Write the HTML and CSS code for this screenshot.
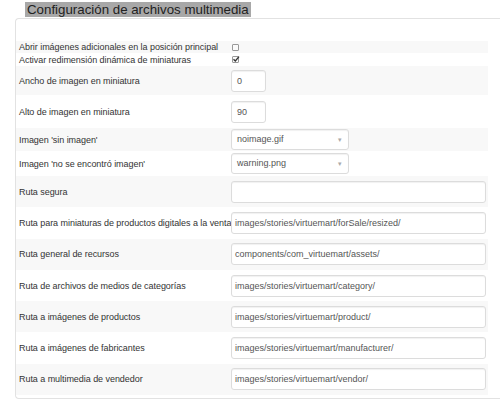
FILE: index.html
```html
<!DOCTYPE html>
<html lang="es">
<head>
  <meta charset="UTF-8">
  <title>Configuración de archivos multimedia</title>
  <link rel="stylesheet" href="styles.css">
</head>
<body>
  <div class="legend">Configuración de archivos multimedia</div>

  <div class="panel">
    <div class="row r-check-1">
      <div class="key">Abrir imágenes adicionales en la posición principal</div>
      <span class="checkbox"></span>
    </div>
    <div class="row r-check-2">
      <div class="key">Activar redimensión dinámica de miniaturas</div>
      <span class="checkbox">
        <svg viewBox="0 0 8 8" width="8" height="8"><path d="M1.5 4.2 L3.3 6 L7 1.6" fill="none" stroke="#333" stroke-width="1.3"/></svg>
      </span>
    </div>
    <div class="row r-width">
      <div class="key">Ancho de imagen en miniatura</div>
      <div class="field small">0</div>
    </div>
    <div class="row r-height">
      <div class="key">Alto de imagen en miniatura</div>
      <div class="field small">90</div>
    </div>
    <div class="row r-select-1">
      <div class="key">Imagen 'sin imagen'</div>
      <div class="field select">noimage.gif<span class="arrow">▾</span></div>
    </div>
    <div class="row r-select-2">
      <div class="key">Imagen 'no se encontró imagen'</div>
      <div class="field select">warning.png<span class="arrow">▾</span></div>
    </div>
    <div class="row r-path">
      <div class="key">Ruta segura</div>
      <div class="field wide"></div>
    </div>
    <div class="row r-path">
      <div class="key">Ruta para miniaturas de productos digitales a la venta</div>
      <div class="field wide">images/stories/virtuemart/forSale/resized/</div>
    </div>
    <div class="row r-path">
      <div class="key">Ruta general de recursos</div>
      <div class="field wide">components/com_virtuemart/assets/</div>
    </div>
    <div class="row r-path">
      <div class="key">Ruta de archivos de medios de categorías</div>
      <div class="field wide">images/stories/virtuemart/category/</div>
    </div>
    <div class="row r-path">
      <div class="key">Ruta a imágenes de productos</div>
      <div class="field wide">images/stories/virtuemart/product/</div>
    </div>
    <div class="row r-path">
      <div class="key">Ruta a imágenes de fabricantes</div>
      <div class="field wide">images/stories/virtuemart/manufacturer/</div>
    </div>
    <div class="row r-path">
      <div class="key">Ruta a multimedia de vendedor</div>
      <div class="field wide">images/stories/virtuemart/vendor/</div>
    </div>
  </div>
</body>
</html>
```

FILE: styles.css
```css
body {
  margin: 0;
  background: #fff;
  color: #333;
  font-family: "Liberation Sans", Arial, sans-serif;
  overflow: hidden;
}

/* Titulo del bloque */
.legend {
  display: inline-block;
  margin-left: 25px;
  padding: 0 2px;
  height: 15px;
  line-height: 16px;
  font-size: 13.3px;
  background: #a8a8a8;
  color: #222;
}

.panel {
  margin-left: 15px;
  width: 500px;
  border: 1px solid #e2e2e2;
  border-right: none;
  border-radius: 4px 0 0 4px;
  padding: 22px 0 3px 0;
}

.row {
  display: flex;
  align-items: center;
  width: 472px;
  font-size: 9px;
}

.row:nth-child(odd) {
  background: #f8f8f8;
}

.key {
  flex: none;
  width: 212px;
  padding-left: 3px;
  letter-spacing: -0.05px;
  white-space: nowrap;
  color: #333;
}

.r-check-1 { height: 12px; }
.r-check-2 { height: 13px; }
.r-width { height: 29px; }
.r-height { height: 33px; }
.r-select-1 { height: 23px; }
.r-select-2 { height: 25px; }
.r-path { height: 31.3px; }

.checkbox {
  display: inline-block;
  width: 5px;
  height: 5px;
  margin-left: 1px;
  border: 1px solid #999;
  border-radius: 1px;
  background: #fafafa;
  position: relative;
}

.checkbox svg {
  position: absolute;
  left: -1px;
  top: -2px;
}

.field {
  flex: none;
  box-sizing: border-box;
  height: 22px;
  line-height: 20px;
  padding: 0 3px;
  border: 1px solid #dcdcdc;
  border-radius: 3px;
  box-shadow: inset 0 1px 1px rgba(0, 0, 0, 0.06);
  background: #fff;
  color: #555;
  font-size: 9px;
  white-space: nowrap;
}

.small {
  width: 35px;
  padding-left: 5px;
}

.wide {
  width: 255px;
}

.select {
  width: 118px;
  height: 21px;
  line-height: 19px;
  padding-left: 5px;
  position: relative;
}

.arrow {
  position: absolute;
  right: 6px;
  top: 0;
  color: #aaa;
  font-size: 7px;
}
```
